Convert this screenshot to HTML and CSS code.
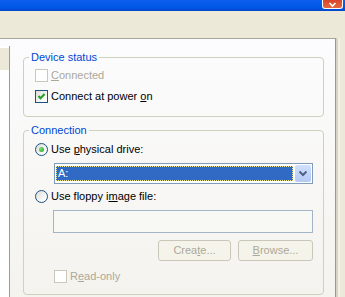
FILE: index.html
```html
<!DOCTYPE html>
<html lang="en">
<head>
    <meta charset="UTF-8">
    <title>Floppy settings</title>
    <link rel="stylesheet" href="styles.css">
</head>
<body>
    <div class="titlebar">
        <span class="close-btn">
            <svg width="19" height="9" viewBox="0 0 19 9"><path d="M6.5 3 L9.5 6 L12.5 3" stroke="#fff" stroke-width="1.6" fill="none"/></svg>
        </span>
    </div>
    <div class="menu-strip"></div>

    <div class="page">
        <div class="device-list">
            <div class="device-item"></div>
        </div>

        <div class="settings">
            <fieldset class="group group-status">
                <legend>Device status</legend>
                <label class="option disabled">
                    <span class="check"></span>
                    <span><u>C</u>onnected</span>
                </label>
                <label class="option option-next">
                    <span class="check">
                        <svg width="11" height="11" viewBox="0 0 11 11"><polyline points="2.5,5 4.5,7.3 8.6,3" stroke="#21A121" stroke-width="2" fill="none"/></svg>
                    </span>
                    <span>Connect at power <u>o</u>n</span>
                </label>
            </fieldset>

            <fieldset class="group group-connection">
                <legend>Connection</legend>
                <label class="option">
                    <span class="radio checked"></span>
                    <span>Use <u>p</u>hysical drive:</span>
                </label>
                <div class="combo">
                    <span class="combo-value">A:</span>
                    <span class="combo-btn">
                        <svg width="16" height="17" viewBox="0 0 16 17"><path d="M4.5 6.5 L8 10 L11.5 6.5" stroke="#4D6185" stroke-width="2" fill="none"/></svg>
                    </span>
                </div>
                <label class="option option-radio2">
                    <span class="radio"></span>
                    <span>Use floppy i<u>m</u>age file:</span>
                </label>
                <div class="textbox"></div>
                <div class="button-row">
                    <span class="btn btn-create">Crea<u>t</u>e...</span>
                    <span class="btn btn-browse"><u>B</u>rowse...</span>
                </div>
                <label class="option disabled option-readonly">
                    <span class="check"></span>
                    <span>R<u>e</u>ad-only</span>
                </label>
            </fieldset>
        </div>
    </div>
</body>
</html>
```

FILE: styles.css
```css
body {
    margin: 0;
    width: 345px;
    height: 297px;
    overflow: hidden;
    background: #ece9d8;
    font-family: 'Liberation Sans', Arial, sans-serif;
    font-size: 11px;
    color: #000;
}

/* Window title bar (only the bottom edge is visible) */
.titlebar {
    height: 11px;
    display: flex;
    justify-content: flex-end;
    background: linear-gradient(#0c5ff0, #0056e5 70%, #0047cc);
}

.close-btn {
    width: 21px;
    height: 9px;
    margin-right: 2px;
    box-sizing: border-box;
    border: 1px solid #fff;
    border-top: none;
    border-radius: 0 0 3px 3px;
    background: linear-gradient(#d8442a, #e8683f);
    display: flex;
}

.menu-strip {
    height: 27px;
}

/* Tab page */
.page {
    display: flex;
    width: 336px;
    height: 259px;
    box-sizing: border-box;
    border-top: 1px solid #a7a69a;
    border-right: 1px solid #919b9c;
    background: linear-gradient(#fcfcfe, #f4f3ee);
    box-shadow: 2px 0 0 #d7d4c4, 4px 0 0 #f4f2e8;
}

.device-list {
    width: 9px;
    margin-top: 7px;
    border-right: 1px solid #8d9db3;
    background: #fff;
}

.device-item {
    height: 22px;
    margin-top: 2px;
    background: #ece9d8;
}

.settings {
    margin-left: 13px;
    padding-top: 12px;
}

/* Group boxes */
.group {
    width: 301px;
    box-sizing: border-box;
    margin: 0;
    min-width: 0;
    border: 1px solid #d0d0bf;
    border-radius: 4px;
    padding: 5px 0 13px;
}

.group legend {
    margin-left: 5px;
    padding: 0 2px;
    line-height: 13px;
    color: #0046d5;
}

.group-connection {
    margin-top: 7px;
    padding: 6px 0 11px;
}

/* Checkboxes and radios */
.option {
    display: flex;
    align-items: center;
    gap: 3px;
    height: 13px;
    line-height: 13px;
    margin-left: 11px;
    white-space: nowrap;
}

.option-next {
    margin-top: 8px;
}

.option.disabled {
    color: #aca899;
}

.check {
    width: 13px;
    height: 13px;
    box-sizing: border-box;
    border: 1px solid #1c5180;
    background: linear-gradient(135deg, #dcdcd7, #fff 85%);
    display: flex;
}

.disabled .check {
    border-color: #cac8bb;
    background: #fff;
}

.radio {
    width: 13px;
    height: 13px;
    box-sizing: border-box;
    border: 1px solid #1c5180;
    border-radius: 50%;
    background: linear-gradient(135deg, #dcdcd7, #fff 85%);
    display: flex;
    align-items: center;
    justify-content: center;
}

.radio.checked::after {
    content: "";
    width: 5px;
    height: 5px;
    border-radius: 50%;
    background: radial-gradient(circle at 35% 35%, #77e274, #21a121);
}

/* Drop-down list */
.combo {
    display: flex;
    align-items: center;
    width: 259px;
    height: 21px;
    box-sizing: border-box;
    margin: 7px 0 0 30px;
    border: 1px solid #7f9db9;
    background: #fff;
}

.combo-value {
    flex: 1;
    height: 15px;
    margin: 0 2px 0 1px;
    box-sizing: border-box;
    padding-left: 1px;
    line-height: 13px;
    color: #fff;
    background: #316ac5;
    border: 1px dotted #f0e68c;
}

.combo-btn {
    width: 16px;
    height: 17px;
    margin-right: 1px;
    border-radius: 2px;
    background: linear-gradient(#d2e0fd, #b4c8f6);
    display: flex;
}

.option-radio2 {
    margin-top: 6px;
}

.textbox {
    width: 260px;
    height: 23px;
    box-sizing: border-box;
    margin: 7px 0 0 29px;
    border: 1px solid #a5b5c8;
    background: #f8f8f4;
}

/* Buttons */
.button-row {
    display: flex;
    justify-content: flex-end;
    gap: 7px;
    width: 289px;
    margin-top: 7px;
}

.btn {
    height: 21px;
    box-sizing: border-box;
    border: 1px solid #c9c7ba;
    border-radius: 3px;
    background: #f5f4ea;
    color: #aca899;
    line-height: 19px;
    text-align: center;
}

.btn-create {
    width: 73px;
}

.btn-browse {
    width: 75px;
}

.option-readonly {
    margin: 9px 0 0 30px;
}
```
